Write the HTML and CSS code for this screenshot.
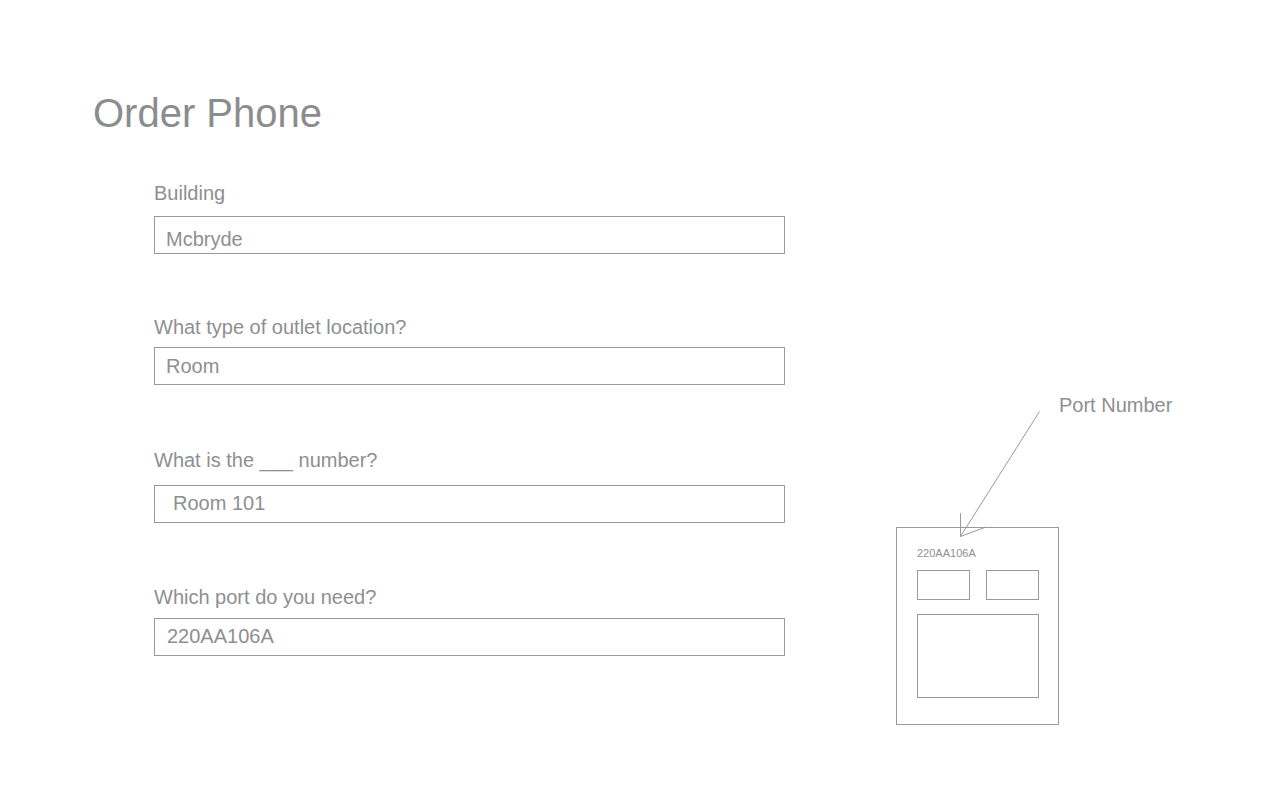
FILE: index.html
```html
<!DOCTYPE html>
<html lang="en">
<head>
<meta charset="utf-8">
<title>Order Phone</title>
<link rel="stylesheet" href="styles.css">
</head>
<body>
<main class="page">
  <h1 class="title">Order Phone</h1>
  <div class="content">
    <form class="form">
      <div class="field field--building">
        <label class="label">Building</label>
        <div class="input input--building">Mcbryde</div>
      </div>
      <div class="field field--type">
        <label class="label">What type of outlet location?</label>
        <div class="input input--type">Room</div>
      </div>
      <div class="field field--number">
        <label class="label">What is the ___ number?</label>
        <div class="input input--number">Room 101</div>
      </div>
      <div class="field field--port">
        <label class="label">Which port do you need?</label>
        <div class="input input--port">220AA106A</div>
      </div>
    </form>
    <div class="diagram">
      <div class="callout">Port Number</div>
      <div class="outlet">
        <div class="outlet-code">220AA106A</div>
        <div class="outlet-ports">
          <div class="port"></div>
          <div class="port"></div>
        </div>
        <div class="outlet-plate"></div>
      </div>
      <svg class="arrow" width="160" height="160" viewBox="0 0 160 160" xmlns="http://www.w3.org/2000/svg">
        <line x1="143.5" y1="18.5" x2="64.5" y2="143.5" />
        <line x1="64.5" y1="120" x2="64.5" y2="143.5" />
        <line x1="64.5" y1="143.5" x2="90" y2="134" />
      </svg>
    </div>
  </div>
</main>
</body>
</html>
```

FILE: styles.css
```css
* {
  box-sizing: border-box;
}

html, body {
  margin: 0;
  padding: 0;
  background: #ffffff;
}

body {
  font-family: "Liberation Sans", Arial, Helvetica, sans-serif;
  color: #8e8f91;
  width: 1280px;
  height: 800px;
  overflow: hidden;
}

.page {
  padding-left: 92px;
}

.title {
  margin: 89px 0 0 1px;
  font-size: 40px;
  line-height: 48px;
  font-weight: normal;
  color: #8b8c8e;
}

.content {
  display: flex;
  align-items: flex-start;
  margin-top: 44px;
}

.form {
  margin-left: 62px;
  width: 631px;
  display: flex;
  flex-direction: column;
}

.label {
  display: block;
  font-size: 20px;
  line-height: 24px;
}

.input {
  height: 38px;
  border: 1px solid #9a9a9a;
  font-size: 20px;
  line-height: 24px;
  padding-left: 11px;
  color: #8e8f91;
}

.field--type {
  margin-top: 61px;
}

.field--number {
  margin-top: 63px;
}

.field--port {
  margin-top: 62px;
}

.field--building .label {
  margin-bottom: 11px;
}

.field--type .label {
  margin-bottom: 8px;
}

.field--number .label {
  margin-bottom: 13px;
}

.field--port .label {
  margin-bottom: 9px;
}

.input--building {
  padding-top: 10px;
}

.input--type {
  padding-top: 6px;
}

.input--number {
  padding-top: 5px;
  padding-left: 18px;
}

.input--port {
  padding-top: 5px;
  padding-left: 12px;
}

.diagram {
  position: relative;
  margin-left: 111px;
  margin-top: 212px;
  width: 290px;
}

.callout {
  margin-left: 163px;
  font-size: 20px;
  line-height: 24px;
  white-space: nowrap;
}

.outlet {
  margin-top: 110px;
  width: 163px;
  height: 198px;
  border: 1px solid #9a9a9a;
  padding: 19px 0 0 20px;
}

.outlet-code {
  font-size: 11px;
  line-height: 13px;
}

.outlet-ports {
  display: flex;
  gap: 16px;
  margin-top: 10px;
}

.port {
  width: 53px;
  height: 30px;
  border: 1px solid #9a9a9a;
}

.outlet-plate {
  margin-top: 14px;
  width: 122px;
  height: 84px;
  border: 1px solid #9a9a9a;
}

.arrow {
  position: absolute;
  left: 0;
  top: 0;
  overflow: visible;
}

.arrow line {
  stroke: #9a9a9a;
  stroke-width: 1;
  fill: none;
}
```
